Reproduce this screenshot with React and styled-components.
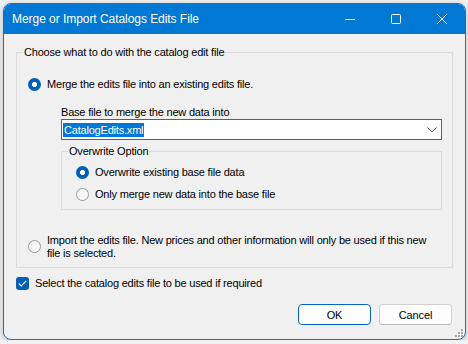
import styled, { createGlobalStyle, css } from "styled-components";

const GlobalStyle = createGlobalStyle`
  html, body {
    margin: 0;
    padding: 0;
    background: #f2f2f2;
  }
  body {
    font-family: "Liberation Sans", Arial, sans-serif;
    color: #000;
  }
`;

const Window = styled.div`
  position: relative;
  box-sizing: border-box;
  width: 463px;
  height: 337px;
  margin: 3px 0 0 3px;
  border: 1px solid #0078d4;
  border-radius: 8px;
  background: #f0f0f0;
  overflow: hidden;
  box-shadow: 0 2px 8px rgba(0, 0, 0, 0.22);
  display: flex;
  flex-direction: column;
`;

const TitleBar = styled.div`
  height: 30px;
  flex: none;
  display: flex;
  align-items: center;
  background: #0078d4;
  color: #fff;
`;

const Title = styled.div`
  flex: 1;
  padding-left: 8px;
  font-size: 12px;
  letter-spacing: -0.05px;
`;

const CaptionButton = styled.div`
  width: 46px;
  height: 30px;
  display: flex;
  align-items: center;
  justify-content: center;
`;

const Body = styled.div`
  flex: 1;
  padding: 11px 12px 0 12px;
  font-size: 11px;
  letter-spacing: -0.2px;
`;

const Group = styled.fieldset`
  margin: ${(p) => p.$top || 0}px 0 0 0;
  padding: 0;
  min-width: 0;
  border: 1px solid #dcdcdc;
`;

const Legend = styled.legend`
  margin-left: 6px;
  padding: 0 1px;
  line-height: 14px;
`;

const GroupContent = styled.div`
  padding: ${(p) => p.$pad};
`;

const Option = styled.label`
  display: flex;
  align-items: ${(p) => (p.$multi ? "flex-start" : "center")};
  gap: 6px;
  min-height: 22px;
  margin-top: ${(p) => p.$top || 0}px;
  line-height: ${(p) => (p.$multi ? "13px" : "14px")};
`;

const Radio = styled.span`
  box-sizing: border-box;
  flex: none;
  width: 13px;
  height: 13px;
  border-radius: 50%;
  margin-top: ${(p) => p.$shift || 0}px;
  ${(p) =>
    p.$checked
      ? css`
          background: radial-gradient(circle, #fff 0 2.3px, #005fb8 2.9px);
        `
      : css`
          border: 1px solid #979797;
          background: #f7f7f7;
        `}
`;

const SubBlock = styled.div`
  margin: 10px 0 0 33px;
`;

const FieldLabel = styled.div`
  line-height: 14px;
`;

const Combo = styled.div`
  box-sizing: border-box;
  height: 21px;
  display: flex;
  align-items: center;
  justify-content: space-between;
  padding: 0 4px 0 1px;
  border: 1px solid #0078d4;
  background: #fff;
`;

const Selected = styled.span`
  background: #0078d7;
  color: #fff;
  line-height: 14px;
  padding: 0 1px;
`;

const CheckRow = styled.label`
  display: flex;
  align-items: center;
  gap: 6px;
  margin-top: 8px;
  line-height: 14px;
`;

const CheckBox = styled.span`
  flex: none;
  width: 13px;
  height: 13px;
  border-radius: 3px;
  background: #005fb8;
  display: flex;
  align-items: center;
  justify-content: center;
`;

const ButtonRow = styled.div`
  display: flex;
  justify-content: flex-end;
  gap: 8px;
  margin-top: 14px;
  padding-right: 1px;
`;

const Button = styled.button`
  box-sizing: border-box;
  width: 73px;
  height: 21px;
  padding: 0;
  font-family: inherit;
  font-size: 11px;
  letter-spacing: -0.1px;
  color: #000;
  background: #fdfdfd;
  border-radius: 4px;
  border: 1px solid ${(p) => (p.$default ? "#0067c0" : "#d0d0d0")};
  border-bottom-color: ${(p) => (p.$default ? "#0067c0" : "#b8b8b8")};
`;

const Grip = styled.svg`
  position: absolute;
  right: 1px;
  bottom: 1px;
`;

const Chevron = () => (
  <svg width="10" height="6" viewBox="0 0 10 6">
    <path d="M0.5 0.5 L5 5 L9.5 0.5" fill="none" stroke="#5c5c5c" strokeWidth="1" />
  </svg>
);

export default function App() {
  return (
    <>
      <GlobalStyle />
      <Window>
        <TitleBar>
          <Title>Merge or Import Catalogs Edits File</Title>
          <CaptionButton>
            <svg width="10" height="10" viewBox="0 0 10 10">
              <path d="M0 5.5 H10" stroke="#fff" strokeWidth="1" />
            </svg>
          </CaptionButton>
          <CaptionButton>
            <svg width="10" height="10" viewBox="0 0 10 10">
              <rect x="0.5" y="0.5" width="9" height="9" rx="1" fill="none" stroke="#fff" strokeWidth="1" />
            </svg>
          </CaptionButton>
          <CaptionButton>
            <svg width="10" height="10" viewBox="0 0 10 10">
              <path d="M0.3 0.3 L9.7 9.7 M9.7 0.3 L0.3 9.7" stroke="#fff" strokeWidth="1" />
            </svg>
          </CaptionButton>
        </TitleBar>

        <Body>
          <Group>
            <Legend>Choose what to do with the catalog edit file</Legend>
            <GroupContent $pad="14px 10px 7px 11px">
              <Option>
                <Radio $checked />
                Merge the edits file into an existing edits file.
              </Option>

              <SubBlock>
                <FieldLabel>Base file to merge the new data into</FieldLabel>
                <Combo>
                  <Selected>CatalogEdits.xml</Selected>
                  <Chevron />
                </Combo>

                <Group $top={4}>
                  <Legend>Overwrite Option</Legend>
                  <GroupContent $pad="3px 0 4px 14px">
                    <Option>
                      <Radio $checked />
                      Overwrite existing base file data
                    </Option>
                    <Option>
                      <Radio />
                      Only merge new data into the base file
                    </Option>
                  </GroupContent>
                </Group>
              </SubBlock>

              <Option $multi $top={24}>
                <Radio $shift={6} />
                <span>
                  Import the edits file. New prices and other information will only be used if this new
                  <br />
                  file is selected.
                </span>
              </Option>
            </GroupContent>
          </Group>

          <CheckRow>
            <CheckBox>
              <svg width="9" height="7" viewBox="0 0 9 7">
                <path d="M0.8 3.6 L3.2 6 L8.2 0.8" fill="none" stroke="#fff" strokeWidth="1.2" />
              </svg>
            </CheckBox>
            Select the catalog edits file to be used if required
          </CheckRow>

          <ButtonRow>
            <Button $default>OK</Button>
            <Button>Cancel</Button>
          </ButtonRow>
        </Body>

        <Grip width="10" height="10" viewBox="0 0 10 10">
          <g fill="#a8a8a8">
            <rect x="7" y="1" width="2" height="2" />
            <rect x="4" y="4" width="2" height="2" />
            <rect x="7" y="4" width="2" height="2" />
            <rect x="1" y="7" width="2" height="2" />
            <rect x="4" y="7" width="2" height="2" />
            <rect x="7" y="7" width="2" height="2" />
          </g>
        </Grip>
      </Window>
    </>
  );
}
